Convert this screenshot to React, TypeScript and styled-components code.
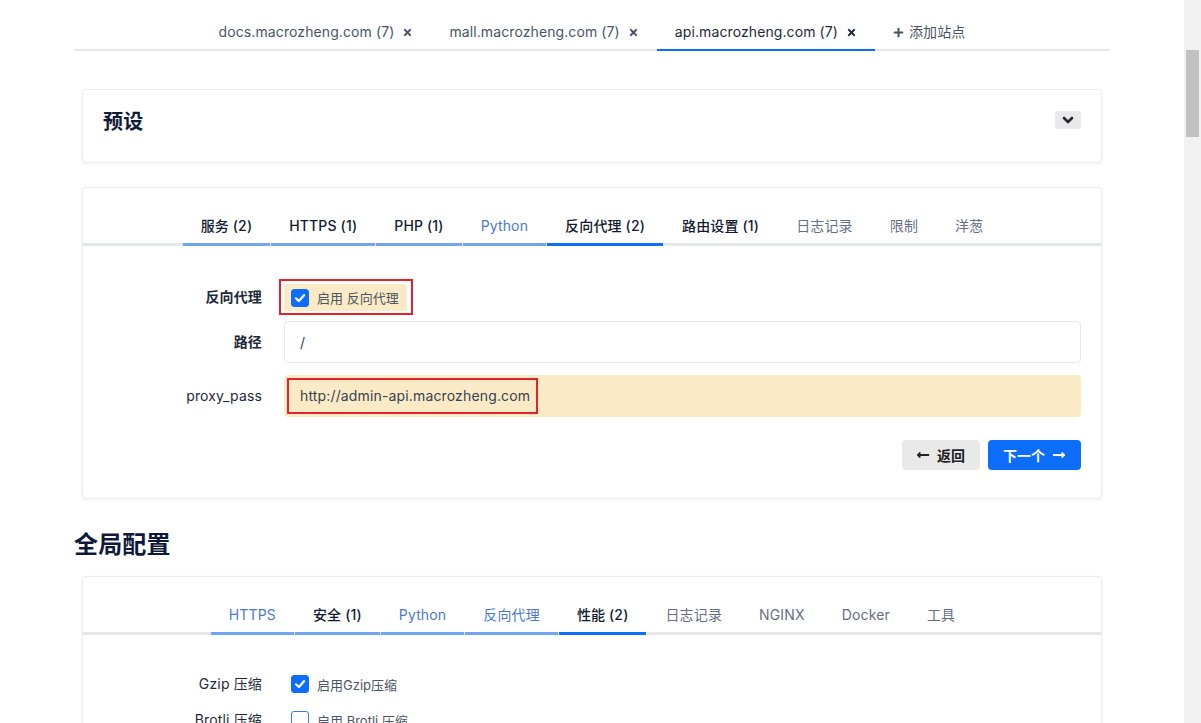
import styled, { createGlobalStyle } from 'styled-components';
import { FaTimes, FaPlus, FaLongArrowAltLeft, FaLongArrowAltRight } from 'react-icons/fa';

const GlobalStyle = createGlobalStyle`
  html, body {
    margin: 0;
    padding: 0;
    overflow: hidden;
  }
  body {
    font-family: Inter, "Noto Sans CJK SC", sans-serif;
    letter-spacing: 0.15px;
    background: #fff;
    color: #1f2937;
  }
  * { box-sizing: border-box; }
`;

const Viewport = styled.div`
  display: flex;
  height: 100vh;
`;

const Main = styled.div`
  flex: 1;
  overflow: hidden;
`;

const ScrollTrack = styled.div`
  width: 17px;
  background: #f1f1f1;
  padding: 0 2px;
`;

const ScrollThumb = styled.div`
  margin-top: 50px;
  height: 87px;
  background: #c1c1c1;
`;

const Container = styled.div`
  width: 1036px;
  margin: 0 auto;
`;

const SiteTabs = styled.div`
  display: flex;
  justify-content: center;
  border-bottom: 2px solid #e5e7eb;
`;

const SiteTab = styled.div<{ $active?: boolean }>`
  display: flex;
  align-items: center;
  gap: 8px;
  padding: 22px 18px 7px;
  line-height: 20px;
  font-size: 14px;
  letter-spacing: 0.1px;
  color: ${(p) => (p.$active ? '#1f2937' : '#4b5563')};
  border-bottom: 2px solid ${(p) => (p.$active ? '#0d6efd' : 'transparent')};
  margin-bottom: -2px;

  svg {
    color: ${(p) => (p.$active ? '#1f2937' : '#4b5563')};
  }
`;

const AddTab = styled(SiteTab)`
  gap: 5px;
`;

const Card = styled.div<{ $top: number }>`
  margin: ${(p) => p.$top}px 8px 0;
  background: #fff;
  border: 1px solid #ebedf0;
  border-radius: 4px;
  box-shadow: 0 1px 4px rgba(0, 0, 0, 0.05);
`;

const PresetHead = styled.div`
  display: flex;
  align-items: flex-start;
  justify-content: space-between;
  padding: 18px 20px 26px;
`;

const PresetTitle = styled.h2`
  margin: 0;
  font-size: 20px;
  line-height: 28px;
  font-weight: 700;
  color: #0f1a3a;
`;

const ChevronButton = styled.button`
  width: 26px;
  height: 18px;
  margin-top: 3px;
  border: none;
  border-radius: 4px;
  background: #e9e9e9;
  display: flex;
  align-items: center;
  justify-content: center;
  padding: 0;
`;

const TabList = styled.div`
  display: flex;
  justify-content: center;
  gap: 1px;
  margin-top: 28px;
  border-bottom: 3px solid #e5e7eb;
`;

type TabState = 'done' | 'active' | 'todo';
type Tone = 'strong' | 'link' | 'muted';

const toneColor: Record<Tone, string> = {
  strong: '#111a30',
  link: '#4b79cf',
  muted: '#667085',
};

const stateColor: Record<TabState, string> = {
  done: '#6ea6f5',
  active: '#0d6efd',
  todo: 'transparent',
};

const Tab = styled.div<{ $state: TabState; $tone: Tone }>`
  padding: 0 18px 7px;
  font-size: 14px;
  line-height: 20px;
  font-weight: ${(p) => (p.$tone === 'strong' ? 500 : 400)};
  color: ${(p) => toneColor[p.$tone]};
  border-bottom: 3px solid ${(p) => stateColor[p.$state]};
  margin-bottom: -3px;
  white-space: nowrap;
`;

const Form = styled.div<{ $top: number }>`
  display: grid;
  grid-template-columns: 159px 1fr;
  column-gap: 22px;
  row-gap: 12px;
  padding: ${(p) => p.$top}px 20px 0;
  align-items: center;
`;

const Label = styled.div<{ $bold?: boolean }>`
  text-align: right;
  font-size: 14px;
  line-height: 20px;
  font-weight: ${(p) => (p.$bold ? 600 : 400)};
  color: #1e293b;
`;

const CheckRow = styled.div`
  height: 24px;
  display: flex;
  align-items: center;
`;

const Marker = styled.span`
  display: inline-flex;
  margin-left: -5px;
  padding: 3px 4px 2px 3px;
  border: 2px solid #e3222a;
`;

const CheckPill = styled.label<{ $marked?: boolean }>`
  display: inline-flex;
  align-items: center;
  gap: 8px;
  height: 27px;
  padding: 0 8px 0 7px;
  border-radius: 3px;
  font-size: 13px;
  letter-spacing: 0;
  color: #4b5563;
  background: ${(p) => (p.$marked ? '#faebc6' : 'transparent')};
`;

const Box = styled.span<{ $checked?: boolean }>`
  width: 18px;
  height: 18px;
  border-radius: 3px;
  display: inline-flex;
  align-items: center;
  justify-content: center;
  background: ${(p) => (p.$checked ? '#0d6efd' : '#fff')};
  border: 1px solid ${(p) => (p.$checked ? '#0d6efd' : '#3b7bf0')};
`;

const Field = styled.div<{ $marked?: boolean }>`
  height: 42px;
  display: flex;
  align-items: center;
  padding-left: ${(p) => (p.$marked ? 2 : 15)}px;
  border: 1px solid ${(p) => (p.$marked ? '#faebc6' : '#e5e7eb')};
  border-radius: 4px;
  background: ${(p) => (p.$marked ? '#faebc6' : '#fff')};
  font-size: 14px;
  color: #374151;
`;

const MarkedValue = styled.span`
  height: 36px;
  line-height: 32px;
  padding: 0 6px 0 11px;
  border: 2px solid #e3222a;
`;

const Actions = styled.div`
  display: flex;
  justify-content: flex-end;
  gap: 8px;
  padding: 23px 20px 28px;
`;

const Button = styled.button<{ $primary?: boolean }>`
  height: 30px;
  display: inline-flex;
  align-items: center;
  gap: 7px;
  padding: 0 15px 0 ${(p) => (p.$primary ? 15 : 14)}px;
  border: none;
  border-radius: 4px;
  font-family: inherit;
  font-size: 14px;
  font-weight: 700;
  letter-spacing: 0;
  background: ${(p) => (p.$primary ? '#0d6efd' : '#e9e9e9')};
  color: ${(p) => (p.$primary ? '#fff' : '#222')};
`;

const SectionTitle = styled.h1`
  margin: 30px 0 0;
  font-size: 24px;
  line-height: 32px;
  font-weight: 700;
  color: #0f1a3a;
`;

const Check = () => (
  <svg width="12" height="12" viewBox="0 0 12 12">
    <path d="M2 6.3 L4.9 9 L10 3.2" fill="none" stroke="#fff" strokeWidth="2.2" strokeLinecap="round" strokeLinejoin="round" />
  </svg>
);

const Chevron = () => (
  <svg width="12" height="8" viewBox="0 0 12 8">
    <path d="M2 2 L6 6 L10 2" fill="none" stroke="#1f2937" strokeWidth="2.6" strokeLinecap="round" strokeLinejoin="round" />
  </svg>
);

const siteTabs = [
  { name: 'docs.macrozheng.com (7)' },
  { name: 'mall.macrozheng.com (7)' },
  { name: 'api.macrozheng.com (7)', active: true },
];

const serverTabs: { name: string; state: TabState; tone: Tone }[] = [
  { name: '服务 (2)', state: 'done', tone: 'strong' },
  { name: 'HTTPS (1)', state: 'done', tone: 'strong' },
  { name: 'PHP (1)', state: 'done', tone: 'strong' },
  { name: 'Python', state: 'done', tone: 'link' },
  { name: '反向代理 (2)', state: 'active', tone: 'strong' },
  { name: '路由设置 (1)', state: 'todo', tone: 'strong' },
  { name: '日志记录', state: 'todo', tone: 'muted' },
  { name: '限制', state: 'todo', tone: 'muted' },
  { name: '洋葱', state: 'todo', tone: 'muted' },
];

const globalTabs: { name: string; state: TabState; tone: Tone }[] = [
  { name: 'HTTPS', state: 'done', tone: 'link' },
  { name: '安全 (1)', state: 'done', tone: 'strong' },
  { name: 'Python', state: 'done', tone: 'link' },
  { name: '反向代理', state: 'done', tone: 'link' },
  { name: '性能 (2)', state: 'active', tone: 'strong' },
  { name: '日志记录', state: 'todo', tone: 'muted' },
  { name: 'NGINX', state: 'todo', tone: 'muted' },
  { name: 'Docker', state: 'todo', tone: 'muted' },
  { name: '工具', state: 'todo', tone: 'muted' },
];

const App = () => {
  return (
    <Viewport>
      <GlobalStyle />
      <Main>
        <Container>
          <SiteTabs>
            {siteTabs.map((t) => (
              <SiteTab key={t.name} $active={t.active}>
                {t.name}
                <FaTimes size={11} />
              </SiteTab>
            ))}
            <AddTab>
              <FaPlus size={11} />
              添加站点
            </AddTab>
          </SiteTabs>

          <Card $top={38}>
            <PresetHead>
              <PresetTitle>预设</PresetTitle>
              <ChevronButton>
                <Chevron />
              </ChevronButton>
            </PresetHead>
          </Card>

          <Card $top={24}>
            <TabList>
              {serverTabs.map((t) => (
                <Tab key={t.name} $state={t.state} $tone={t.tone}>
                  {t.name}
                </Tab>
              ))}
            </TabList>
            <Form $top={39}>
              <Label $bold>反向代理</Label>
              <CheckRow>
                <Marker>
                  <CheckPill $marked>
                    <Box $checked>
                      <Check />
                    </Box>
                    启用 反向代理
                  </CheckPill>
                </Marker>
              </CheckRow>
              <Label $bold>路径</Label>
              <Field>/</Field>
              <Label>proxy_pass</Label>
              <Field $marked>
                <MarkedValue>http://admin-api.macrozheng.com</MarkedValue>
              </Field>
            </Form>
            <Actions>
              <Button>
                <FaLongArrowAltLeft size={14} />
                返回
              </Button>
              <Button $primary>
                下一个
                <FaLongArrowAltRight size={14} />
              </Button>
            </Actions>
          </Card>

          <SectionTitle>全局配置</SectionTitle>

          <Card $top={15}>
            <TabList>
              {globalTabs.map((t) => (
                <Tab key={t.name} $state={t.state} $tone={t.tone}>
                  {t.name}
                </Tab>
              ))}
            </TabList>
            <Form $top={37}>
              <Label>Gzip 压缩</Label>
              <CheckRow>
                <CheckPill>
                  <Box $checked>
                    <Check />
                  </Box>
                  启用Gzip压缩
                </CheckPill>
              </CheckRow>
              <Label>Brotli 压缩</Label>
              <CheckRow>
                <CheckPill>
                  <Box />
                  启用 Brotli 压缩
                </CheckPill>
              </CheckRow>
            </Form>
            <Actions />
          </Card>
        </Container>
      </Main>
      <ScrollTrack>
        <ScrollThumb />
      </ScrollTrack>
    </Viewport>
  );
};

export default App;
